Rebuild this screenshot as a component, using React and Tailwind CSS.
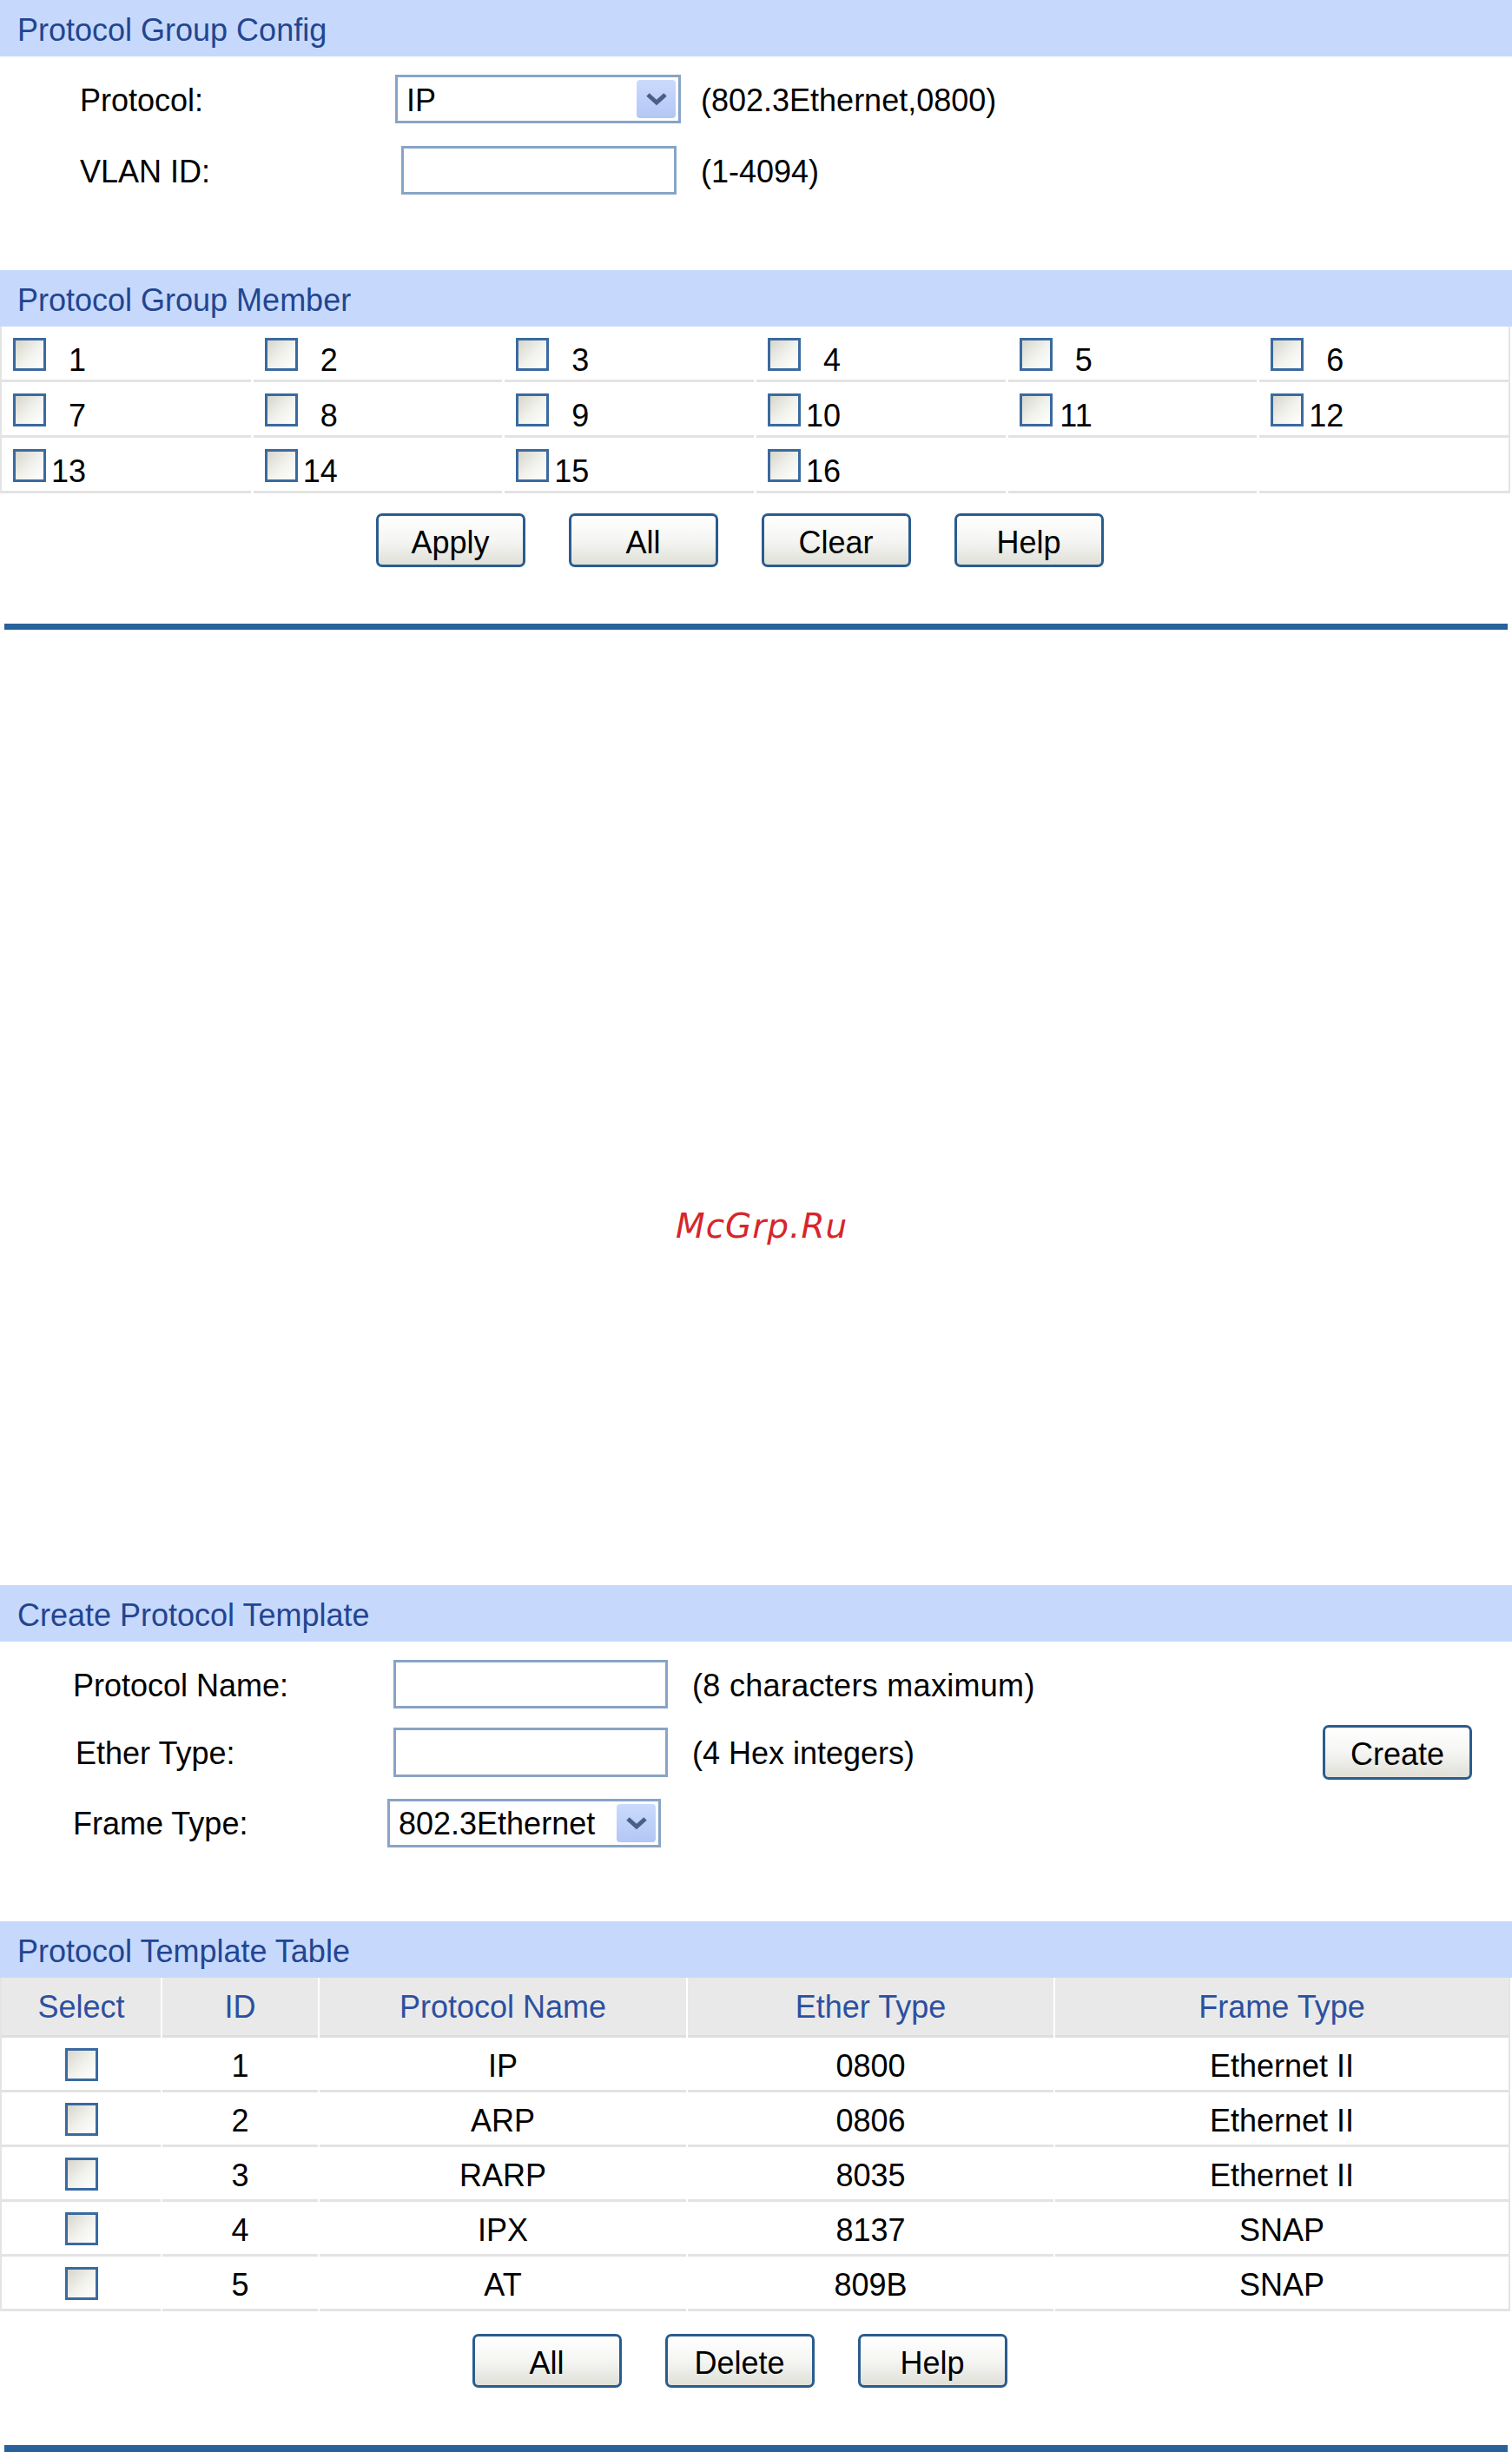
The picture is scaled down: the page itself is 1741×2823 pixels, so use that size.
import React from 'react';

// Shared bits for the switch web UI look (XP-era form controls)

function SectionHeader({ children }) {
  return (
    <div className="flex h-[65px] items-center bg-[#c6d9fd] pl-[20px] pt-[4px] text-[#23458f]">
      {children}
    </div>
  );
}

function Checkbox() {
  return (
    <span className="block h-[38px] w-[38px] shrink-0 border-[3px] border-[#3a6aa0] bg-linear-to-br from-[#d6d6cc] via-[#f1f1ec] to-white" />
  );
}

function Button({ children, className = '' }) {
  return (
    <button
      className={`flex h-[62px] w-[172px] items-center justify-center rounded-[7px] border-[3px] border-[#2b5c8e] bg-linear-to-b from-white via-[#f5f5f3] to-[#e0e0d8] pt-[5px] text-black ${className}`}
    >
      {children}
    </button>
  );
}

function Chevron() {
  return (
    <svg width="26" height="16" viewBox="0 0 26 16" fill="none">
      <polyline points="3,3 13,12 23,3" stroke="#4a5f86" strokeWidth="5" strokeLinejoin="miter" />
    </svg>
  );
}

function Select({ value, width }) {
  return (
    <div
      className="flex h-[56px] items-center justify-between border-[3px] border-[#88a4c6] bg-white pl-[10px] pr-[3px]"
      style={{ width }}
    >
      <span className="pt-[3px]">{value}</span>
      <span className="flex h-[44px] w-[45px] items-center justify-center rounded-[4px] bg-linear-to-b from-[#cbdafd] to-[#b3c7f5]">
        <Chevron />
      </span>
    </div>
  );
}

function TextInput({ className = '' }) {
  return <div className={`h-[56px] w-[316px] border-[3px] border-[#88a4c6] bg-white ${className}`} />;
}

const members = Array.from({ length: 18 }, (_, i) => (i < 16 ? i + 1 : null));

const templates = [
  { id: 1, name: 'IP', ether: '0800', frame: 'Ethernet II' },
  { id: 2, name: 'ARP', ether: '0806', frame: 'Ethernet II' },
  { id: 3, name: 'RARP', ether: '8035', frame: 'Ethernet II' },
  { id: 4, name: 'IPX', ether: '8137', frame: 'SNAP' },
  { id: 5, name: 'AT', ether: '809B', frame: 'SNAP' },
];

export default function App() {
  return (
    <div className="h-[2823px] w-[1741px] overflow-hidden bg-white font-['Liberation_Sans',Arial,sans-serif] text-[36px] leading-none text-black">
      {/* Protocol Group Config */}
      <SectionHeader>Protocol Group Config</SectionHeader>
      <div className="pl-[92px] pt-[21px] pb-[87px]">
        <div className="flex h-[56px] items-center">
          <span className="w-[363px] pt-[3px]">Protocol:</span>
          <div className="w-[352px]">
            <Select value="IP" width={329} />
          </div>
          <span className="pt-[3px]">(802.3Ethernet,0800)</span>
        </div>
        <div className="mt-[26px] flex h-[56px] items-center">
          <span className="w-[363px] pt-[3px]">VLAN ID:</span>
          <div className="w-[352px] pl-[7px]">
            <TextInput className="w-[317px]" />
          </div>
          <span className="pt-[3px]">(1-4094)</span>
        </div>
      </div>

      {/* Protocol Group Member */}
      <SectionHeader>Protocol Group Member</SectionHeader>
      <div className="grid w-[1739px] grid-cols-6 gap-x-[3px] border-x-[2px] border-[#e4e4e4]">
        {members.map((n, i) => (
          <div key={i} className="flex h-[64px] items-start border-b-[3px] border-[#e3e3e3] pl-[13px] pt-[13px]">
            {n && (
              <div className="flex items-end">
                <Checkbox />
                <span className="ml-[6px] w-[40px] text-right leading-[24px]">{n}</span>
              </div>
            )}
          </div>
        ))}
      </div>
      <div className="mt-[23px] flex justify-center gap-[50px] pr-[38px]">
        <Button>Apply</Button>
        <Button>All</Button>
        <Button>Clear</Button>
        <Button>Help</Button>
      </div>
      <div className="mx-[5px] mt-[65px] h-[7px] bg-[#27629a]" />

      {/* blank area with watermark */}
      <div className="h-[1100px] pl-[778px] pt-[667px]">
        <span className="font-['DejaVu_Sans',sans-serif] text-[39px] italic tracking-[1px] text-[#d6262b]">McGrp.Ru</span>
      </div>

      {/* Create Protocol Template */}
      <SectionHeader>Create Protocol Template</SectionHeader>
      <div className="pl-[84px] pt-[21px] pb-[85px]">
        <div className="flex h-[56px] items-center">
          <span className="w-[369px] pt-[3px]">Protocol Name:</span>
          <div className="w-[344px]">
            <TextInput className="w-[315px]" />
          </div>
          <span className="pt-[3px] tracking-[0.3px]">(8 characters maximum)</span>
        </div>
        <div className="mt-[19px] flex h-[63px] items-center">
          <span className="w-[369px] pl-[3px] pt-[3px]">Ether Type:</span>
          <div className="w-[344px]">
            <TextInput className="h-[57px] w-[315px]" />
          </div>
          <span className="pt-[3px]">(4 Hex integers)</span>
          <Button className="ml-auto mr-[46px] h-[63px] w-[169px]">Create</Button>
        </div>
        <div className="mt-[21px] flex h-[57px] items-center">
          <span className="w-[362px] pt-[3px]">Frame Type:</span>
          <Select value="802.3Ethernet" width={315} />
        </div>
      </div>

      {/* Protocol Template Table */}
      <SectionHeader>Protocol Template Table</SectionHeader>
      <div className="grid w-[1739px] grid-cols-[183px_179px_422px_421px_1fr] gap-x-[2px] border-x-[2px] border-[#e4e4e4]">
        {['Select', 'ID', 'Protocol Name', 'Ether Type', 'Frame Type'].map((h) => (
          <div
            key={h}
            className="flex h-[69px] items-center justify-center border-b-[3px] border-[#dedede] bg-[#e9e9e9] pt-[2px] text-[#2c50a0]"
          >
            {h}
          </div>
        ))}
        {templates.map((t) => (
          <React.Fragment key={t.id}>
            <div className="flex h-[63px] items-center justify-center border-b-[3px] border-[#e3e3e3] pt-[2px]">
              <Checkbox />
            </div>
            {[t.id, t.name, t.ether, t.frame].map((v, j) => (
              <div key={j} className="flex h-[63px] items-center justify-center border-b-[3px] border-[#e3e3e3] pt-[5px]">
                {v}
              </div>
            ))}
          </React.Fragment>
        ))}
      </div>
      <div className="mt-[26px] flex justify-center gap-[50px] pr-[38px]">
        <Button>All</Button>
        <Button>Delete</Button>
        <Button>Help</Button>
      </div>
      <div className="mx-[5px] mt-[66px] h-[8px] bg-[#27629a]" />
    </div>
  );
}
